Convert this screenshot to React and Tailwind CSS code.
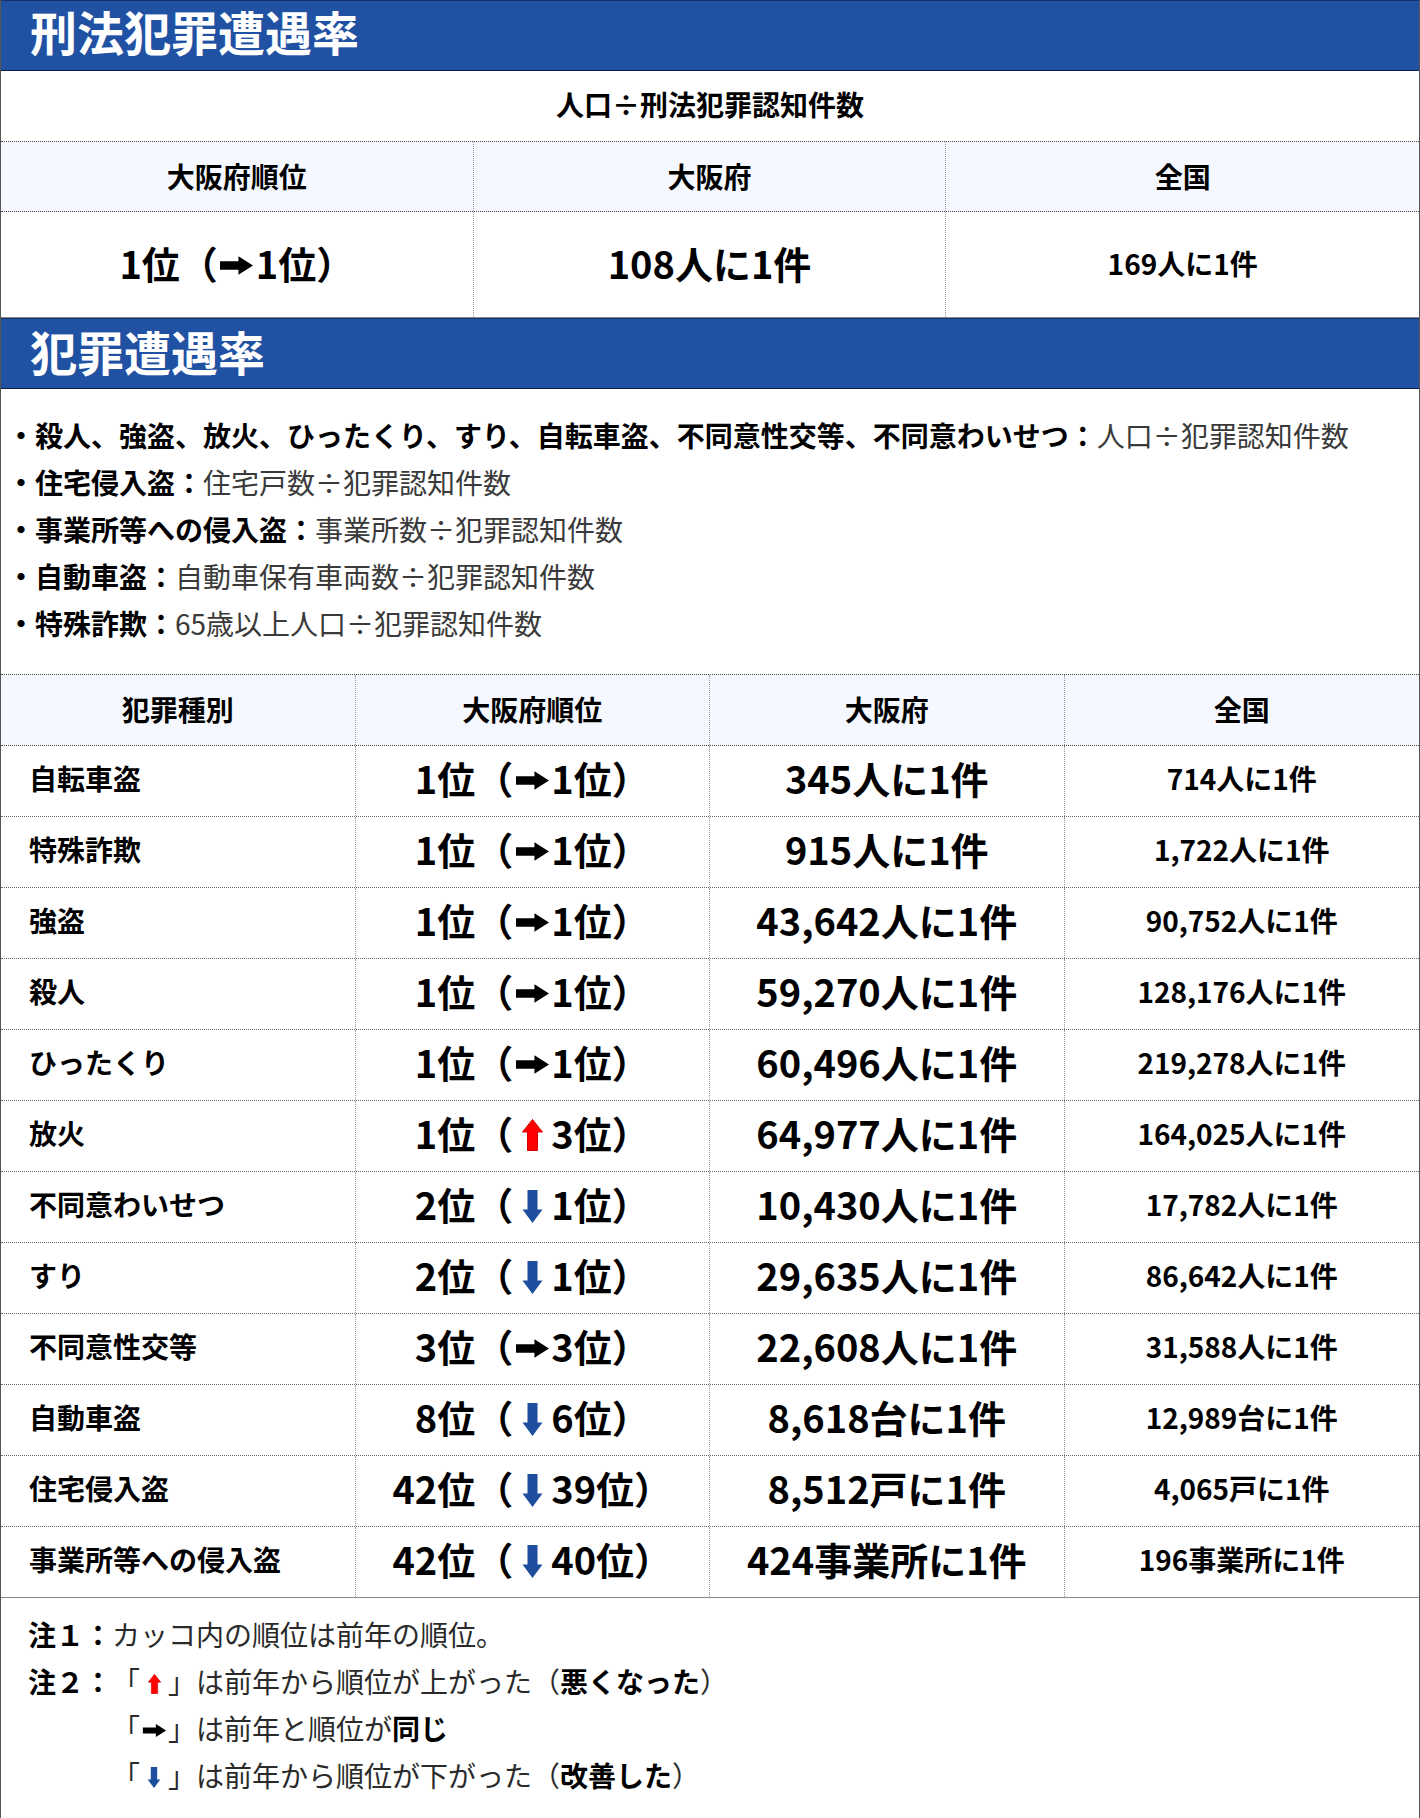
const ROWS = [
  ['自転車盗', '1位', 'right', '1位', '345人に1件', '714人に1件'],
  ['特殊詐欺', '1位', 'right', '1位', '915人に1件', '1,722人に1件'],
  ['強盗', '1位', 'right', '1位', '43,642人に1件', '90,752人に1件'],
  ['殺人', '1位', 'right', '1位', '59,270人に1件', '128,176人に1件'],
  ['ひったくり', '1位', 'right', '1位', '60,496人に1件', '219,278人に1件'],
  ['放火', '1位', 'up', '3位', '64,977人に1件', '164,025人に1件'],
  ['不同意わいせつ', '2位', 'down', '1位', '10,430人に1件', '17,782人に1件'],
  ['すり', '2位', 'down', '1位', '29,635人に1件', '86,642人に1件'],
  ['不同意性交等', '3位', 'right', '3位', '22,608人に1件', '31,588人に1件'],
  ['自動車盗', '8位', 'down', '6位', '8,618台に1件', '12,989台に1件'],
  ['住宅侵入盗', '42位', 'down', '39位', '8,512戸に1件', '4,065戸に1件'],
  ['事業所等への侵入盗', '42位', 'down', '40位', '424事業所に1件', '196事業所に1件']
];

const BULLETS = [
  ['殺人、強盗、放火、ひったくり、すり、自転車盗、不同意性交等、不同意わいせつ：', '人口÷犯罪認知件数'],
  ['住宅侵入盗：', '住宅戸数÷犯罪認知件数'],
  ['事業所等への侵入盗：', '事業所数÷犯罪認知件数'],
  ['自動車盗：', '自動車保有車両数÷犯罪認知件数'],
  ['特殊詐欺：', '65歳以上人口÷犯罪認知件数']
];

function RightArrow({ w = 33, h = 19 }) {
  return (
    <svg width={w} height={h} viewBox="0 0 34 19" className="block">
      <path d="M0 5h19V0l15 9.5L19 19v-5H0z" fill="#000" />
    </svg>
  );
}

function UpArrow({ w = 21, h = 32 }) {
  return (
    <svg width={w} height={h} viewBox="0 0 21 32" className="block">
      <path d="M10.5 0.5L20.5 13h-5v18.5h-10V13h-5z" fill="#ff0000" stroke="#d40000" strokeWidth="1" />
    </svg>
  );
}

function DownArrow({ w = 21, h = 33 }) {
  return (
    <svg width={w} height={h} viewBox="0 0 21 33" className="block">
      <path d="M5.5 0h10v19.5h5L10.5 33 0.5 19.5h5z" fill="#1f4e9f" />
    </svg>
  );
}

function Arrow({ kind, small }) {
  if (kind === 'up') return small ? <UpArrow w={15} h={20} /> : <UpArrow />;
  if (kind === 'down') return small ? <DownArrow w={16} h={21} /> : <DownArrow />;
  return small ? <RightArrow w={25} h={13} /> : <RightArrow />;
}

function Rank({ now, kind, prev }) {
  return (
    <div className="flex items-center justify-center text-[38px] font-bold text-black">
      <span>{now}（</span>
      <span className="flex w-[38px] justify-center pt-[6px]">
        <Arrow kind={kind} />
      </span>
      <span>{prev}）</span>
    </div>
  );
}

function SectionTitle({ children, first }) {
  return (
    <div
      className={`flex h-[71px] items-center border-t border-b border-t-[#13306b] border-b-[#0b1f4a] border-b-dotted bg-[#2151a3] pl-[29px] text-[47px] font-bold leading-none text-white ${first ? 'pb-[10px]' : 'pb-[6px]'}`}
    >
      {children}
    </div>
  );
}

function NoteArrow({ kind }) {
  return (
    <span className="inline-flex items-center">
      <span>「</span>
      <span className="flex w-[28px] justify-center pt-[4px]">
        <Arrow kind={kind} small />
      </span>
      <span>」</span>
    </span>
  );
}

export default function App() {
  return (
    <div className="w-[1420px] border-x border-b border-x-[#555] border-b-[#666] bg-white font-['Noto_Sans_CJK_JP','Noto_Sans',sans-serif] text-black">
      <SectionTitle first>刑法犯罪遭遇率</SectionTitle>

      <div className="flex h-[71px] items-center justify-center border-b border-dotted border-[#444] pb-[4px] text-[28px] font-bold">
        人口÷刑法犯罪認知件数
      </div>

      <div className="grid grid-cols-3 border-b border-dotted border-[#444] bg-[#f5f8fe]">
        {['大阪府順位', '大阪府', '全国'].map((label, i) => (
          <div
            key={label}
            className={`flex h-[69px] items-center justify-center pb-[2px] text-[28px] font-bold ${i < 2 ? 'border-r border-dotted border-[#999]' : ''}`}
          >
            {label}
          </div>
        ))}
      </div>

      <div className="grid grid-cols-3 border-b border-[#8a8a8a]">
        <div className="flex h-[105px] items-center justify-center border-r border-dotted border-[#999] pb-[5px]">
          <Rank now="1位" kind="right" prev="1位" />
        </div>
        <div className="flex h-[105px] items-center justify-center border-r border-dotted border-[#999] pb-[5px] text-[38px] font-bold">
          108人に1件
        </div>
        <div className="flex h-[105px] items-center justify-center pb-[4px] text-[28px] font-bold">
          169人に1件
        </div>
      </div>

      <SectionTitle>犯罪遭遇率</SectionTitle>

      <div className="border-b border-dotted border-[#444] pt-[23px] pb-[27px] pl-[6px] text-[28px] leading-[47px]">
        {BULLETS.map(([head, rest]) => (
          <div key={head} className="whitespace-nowrap">
            <span className="font-bold">・{head}</span>
            <span className="text-[#3a3a3a]">{rest}</span>
          </div>
        ))}
      </div>

      <div className="grid grid-cols-4 border-b border-dotted border-[#444] bg-[#f5f8fe]">
        {['犯罪種別', '大阪府順位', '大阪府', '全国'].map((label, i) => (
          <div
            key={label}
            className={`flex h-[70px] items-center justify-center pb-[3px] text-[28px] font-bold ${i < 3 ? 'border-r border-dotted border-[#999]' : ''}`}
          >
            {label}
          </div>
        ))}
      </div>

      {ROWS.map(([name, now, kind, prev, osaka, nation], idx) => (
        <div
          key={name}
          className={`grid grid-cols-4 border-b ${idx === ROWS.length - 1 ? 'border-solid border-[#8a8a8a]' : 'border-dotted border-[#666]'}`}
        >
          <div className="flex h-[70px] items-center border-r border-dotted border-[#999] pb-[6px] pl-[28px] text-[28px] font-bold">
            {name}
          </div>
          <div className="flex h-[70px] items-center justify-center border-r border-dotted border-[#999] pb-[8px]">
            <Rank now={now} kind={kind} prev={prev} />
          </div>
          <div className="flex h-[70px] items-center justify-center border-r border-dotted border-[#999] pb-[8px] text-[38px] font-bold">
            {osaka}
          </div>
          <div className="flex h-[70px] items-center justify-center pb-[6px] text-[28px] font-bold">
            {nation}
          </div>
        </div>
      ))}

      <div className="pt-[13px] pb-[21px] pl-[27px] text-[28px] leading-[47px] text-[#2a2a2a]">
        <div>
          <span className="font-bold text-black">注１：</span>
          <span>カッコ内の順位は前年の順位。</span>
        </div>
        <div className="flex items-center">
          <span className="font-bold text-black">注２：</span>
          <NoteArrow kind="up" />
          <span>は前年から順位が上がった（</span>
          <span className="font-bold text-black">悪くなった</span>
          <span>）</span>
        </div>
        <div className="flex items-center pl-[84px]">
          <NoteArrow kind="right" />
          <span>は前年と順位が</span>
          <span className="font-bold text-black">同じ</span>
        </div>
        <div className="flex items-center pl-[84px]">
          <NoteArrow kind="down" />
          <span>は前年から順位が下がった（</span>
          <span className="font-bold text-black">改善した</span>
          <span>）</span>
        </div>
      </div>
    </div>
  );
}
